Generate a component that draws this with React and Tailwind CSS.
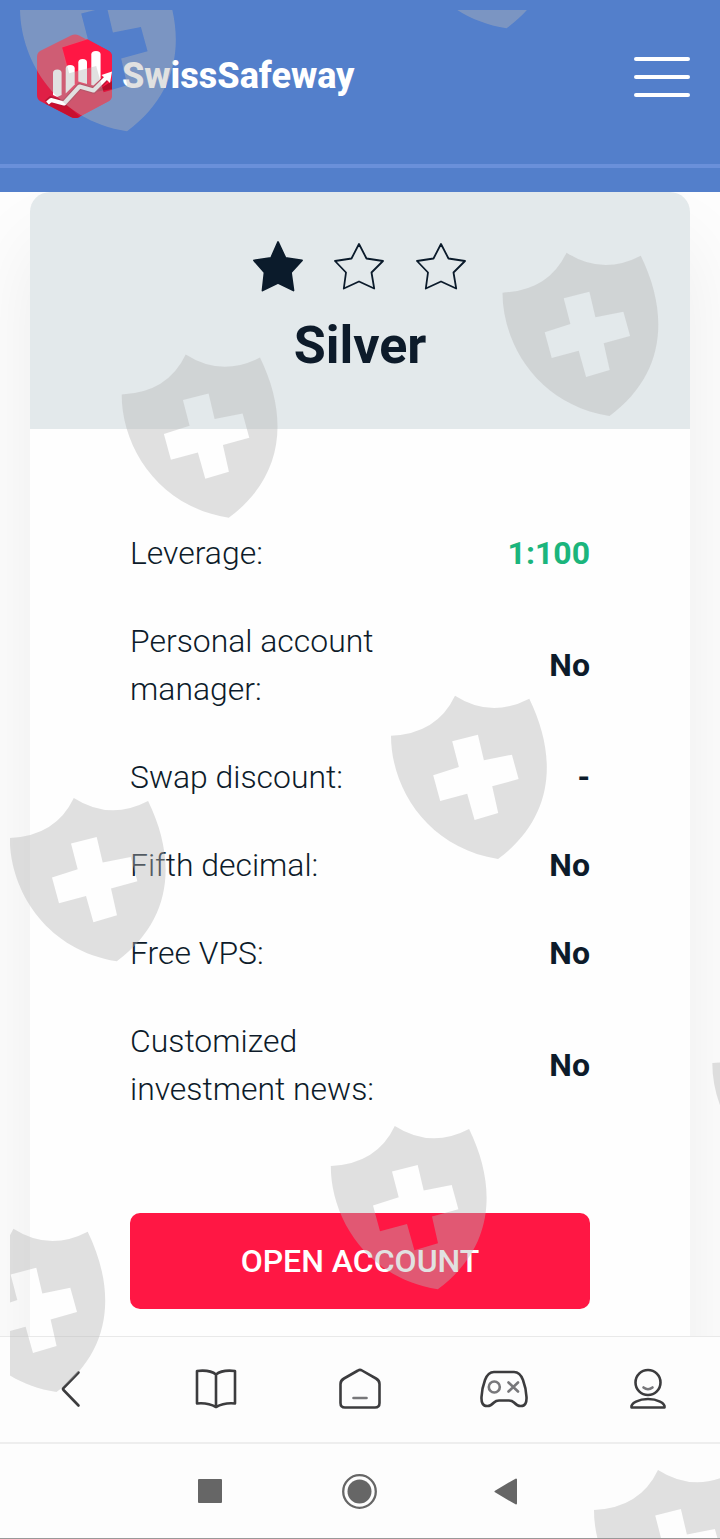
const SHIELD =
  'M0 40Q46 38 64 0Q100 23 138.3 3C167 62 163 122 107 163.3C36 152 0 92 0 40ZM61.2 45.6L67.900 71.3L42.2 79.6L49.2 105.3L76.2 98L83.600 124.3L107.2 117.3L101.2 90.6L127.600 83.3L120.900 59L92.900 64.6L86.900 39Z';

const SHIELDS = [
  [20, -32],
  [399.5, -135],
  [502.5, 252.7],
  [121.7, 354.5],
  [391, 695.7],
  [9.8, 798],
  [712.3, 1023],
  [330.8, 1126],
  [-50.6, 1228.8],
  [594, 1470],
];

const ROWS = [
  { label: 'Leverage:', value: '1:100', accent: true },
  { label: 'Personal account manager:', value: 'No' },
  { label: 'Swap discount:', value: '-' },
  { label: 'Fifth decimal:', value: 'No' },
  { label: 'Free VPS:', value: 'No' },
  { label: 'Customized investment news:', value: 'No' },
];

function Watermark() {
  return (
    <svg className="pointer-events-none absolute inset-0" width="720" height="1539" viewBox="0 0 720 1539">
      <clipPath id="sheet">
        <rect x="10" y="10" width="710" height="1528" />
      </clipPath>
      <g clipPath="url(#sheet)" fill="#b6b6b6" fillOpacity="0.41" fillRule="evenodd">
        {SHIELDS.map(([x, y]) => (
          <path key={`${x},${y}`} d={SHIELD} transform={`translate(${x} ${y})`} />
        ))}
      </g>
    </svg>
  );
}

function Logo() {
  return (
    <svg width="76" height="86" viewBox="0 0 76 86">
      <path d="M34 2.500Q38 0.500 42 2.500L72 18Q75 20 75 24V62Q75 66 72 68L42 84Q38 86 34 84L3 68Q0 66 0 62V24Q0 20 3 18Z" fill="#e01f46" />
      <path d="M25 14L50 6L72 18Q75 20 75 24V58L50 50L34 62Z" fill="#ff1744" />
      <path d="M12 70L29 71L45 56L75 54V62Q75 66 72 68L42 84Q38 86 34 84Z" fill="#e0143c" />
      <path d="M12 70L29 71L43 84Q38 86 34 84L8 70.500Z" fill="#c8102f" />
      <path d="M58 59L75 48V56Z" fill="#b50d2b" />
      <g fill="#fff">
        <path d="M16 40Q16 36.500 20.300 36.500Q24.600 36.500 24.600 40V62L20.300 64L16 62Z" />
        <path d="M28.700 35.500Q28.700 32 33.200 32Q37.700 32 37.700 35.500V51.500L28.700 60.500Z" />
        <path d="M41.300 29.500Q41.300 26 45.700 26Q50 26 50 29.500V51L41.300 48.500Z" />
        <path d="M54.300 21.500Q54.300 18 59 18Q63.600 18 63.600 21.500V46L56.500 52.500L54.300 52Z" />
      </g>
      <path d="M10 70L14 66.500L27 70.500L42.500 53.500L56.500 57.500L70 44.500" fill="none" stroke="#b91535" strokeWidth="6.500" />
      <path d="M10.500 70L14 67L27 70.500L42.500 53.500L56.500 57.500L70 44" fill="none" stroke="#fff" strokeWidth="4.200" strokeLinejoin="round" />
      <path d="M64.500 42L75 38.500L73 50Z" fill="#fff" />
    </svg>
  );
}

function Star({ filled }) {
  return (
    <svg width="52" height="54" viewBox="0 0 52 54">
      <path
        d={filled
          ? 'M26 2L33.500 18L50 20.500L39 32.500L41.500 50.500L26 43L10.500 50.500L12.500 32.500L2 20.500L19 18Z'
          : 'M26 4L33.500 18.500L50 21L38.500 32.500L41.200 48.500L26 41.500L10.800 48.500L13 32.500L2 21L18.500 18.500Z'}
        fill={filled ? '#0b1b2b' : 'none'}
        stroke="#0b1b2b"
        strokeWidth="1.800"
        strokeLinejoin="round"
      />
    </svg>
  );
}

function NavIcon({ children }) {
  return (
    <div className="flex flex-1 justify-center">
      <svg width="52" height="52" viewBox="0 0 52 52" fill="none" stroke="#3c3c3e" strokeWidth="2.600" strokeLinecap="round" strokeLinejoin="round">
        {children}
      </svg>
    </div>
  );
}

export default function App() {
  return (
    <div className="relative flex h-[1539px] w-[720px] flex-col overflow-hidden bg-[#fdfdfd] font-['Roboto',sans-serif] text-[#0d1b2a]">
      <header className="flex h-[192px] shrink-0 flex-col bg-[#537fcb]">
        <div className="flex h-[163.500px] items-start justify-between pt-[33px] pr-[30px] pl-[37px]">
          <div className="flex items-center">
            <Logo />
            <span className="ml-[9px] text-[36px] leading-[84px] font-extrabold text-white">SwissSafeway</span>
          </div>
          <div className="flex w-14 flex-col gap-3.5 pt-[23.500px]">
            <span className="h-1 rounded-full bg-white" />
            <span className="h-1 rounded-full bg-white" />
            <span className="h-1 rounded-full bg-white" />
          </div>
        </div>
        <div className="h-1 bg-[#6a90da]" />
      </header>

      <main className="flex h-[1144px] shrink-0 overflow-hidden px-[30px]">
        <section className="h-[1240px] w-[660px] shrink-0 overflow-hidden rounded-[20px] bg-[#fefefe] shadow-[0_50px_80px_rgba(0,0,0,0.07)]">
          <div className="flex h-[237px] flex-col items-center bg-[#e3e9eb] pt-[47.500px]">
            <div className="mr-0.5 flex gap-[29.500px]">
              <Star filled />
              <Star />
              <Star />
            </div>
            <h1 className="mt-[22px] text-[52px] leading-[60px] font-bold">Silver</h1>
          </div>
          <div className="px-[100px] pt-20">
            <dl className="text-[32px] leading-[48px]">
              {ROWS.map((row) => (
                <div key={row.label} className="flex items-center justify-between py-5">
                  <dt className="w-[300px] text-[31.900px] font-light">{row.label}</dt>
                  <dd className={row.accent ? 'font-bold text-[#1bb57c]' : 'font-bold'}>{row.value}</dd>
                </div>
              ))}
            </dl>
            <button className="mt-20 flex h-24 w-full items-center justify-center rounded-[10px] bg-[#ff1744] text-[32px] font-medium text-white">
              OPEN ACCOUNT
            </button>
          </div>
        </section>
      </main>

      <nav className="flex h-[106px] shrink-0 items-center border-t border-[#e9e9e9] bg-[#fdfdfd] pb-[2px]">
        <NavIcon>
          <path d="M32.500 9.500L17.500 25Q16.500 26 17.500 27L32.500 42.500" />
        </NavIcon>
        <NavIcon>
          <path d="M26 11.500Q20 6.500 7 8V40.500Q18 39.500 26 44Q34 39.500 45 40.500V8Q32 6.500 26 11.500V44" />
        </NavIcon>
        <NavIcon>
          <path d="M24 7.500Q26 6.300 28 7.500L42 15.500Q45.500 17.500 45.500 21V40Q45.500 44.500 41 44.500H11Q6.500 44.500 6.500 40V21Q6.500 17.500 10 15.500Z" />
          <path d="M19.500 35H32.500" stroke="#77777a" />
        </NavIcon>
        <NavIcon>
          <path d="M16 9H36Q42 9 45 17Q48 25 48.500 34Q49 43 43 43Q40 43.500 36 39.500Q34 37.500 31 37.500H21Q18 37.500 16 39.500Q12 43.500 9 43Q3 43 3.500 34Q4 25 7 17Q10 9 16 9Z" />
          <g stroke="#77777a">
            <circle cx="16.300" cy="24" r="5.500" />
            <path d="M30.500 19.500L40 28.500M40 19.500L30.500 28.500" />
          </g>
        </NavIcon>
        <NavIcon>
          <circle cx="26" cy="19.500" r="12.500" />
          <path d="M9.500 44.500C8.500 40 17 36 26 36C35 36 43.500 40 42.500 44.500Z" />
          <path d="M21.500 24.500Q26 28 30.500 24.500" stroke="#77777a" />
        </NavIcon>
      </nav>

      <footer className="flex h-[97px] shrink-0 items-center border-t-2 border-b border-t-[#eeeeee] border-b-[#999999] bg-[#fdfdfd] pl-[198px]">
        <span className="h-6 w-6 rounded-[1px] bg-[#666666]" />
        <svg className="ml-[119px]" width="37" height="37" viewBox="0 0 37 37">
          <circle cx="18.500" cy="18.500" r="16.300" fill="none" stroke="#666" strokeWidth="2.300" />
          <circle cx="18.500" cy="18.500" r="12" fill="#666" />
        </svg>
        <svg className="ml-[116px]" width="24" height="27" viewBox="0 0 24 27">
          <path d="M22 1.500V25.500L1.500 13.500Z" fill="#666" stroke="#666" strokeWidth="2" strokeLinejoin="round" />
        </svg>
      </footer>

      <Watermark />
    </div>
  );
}
